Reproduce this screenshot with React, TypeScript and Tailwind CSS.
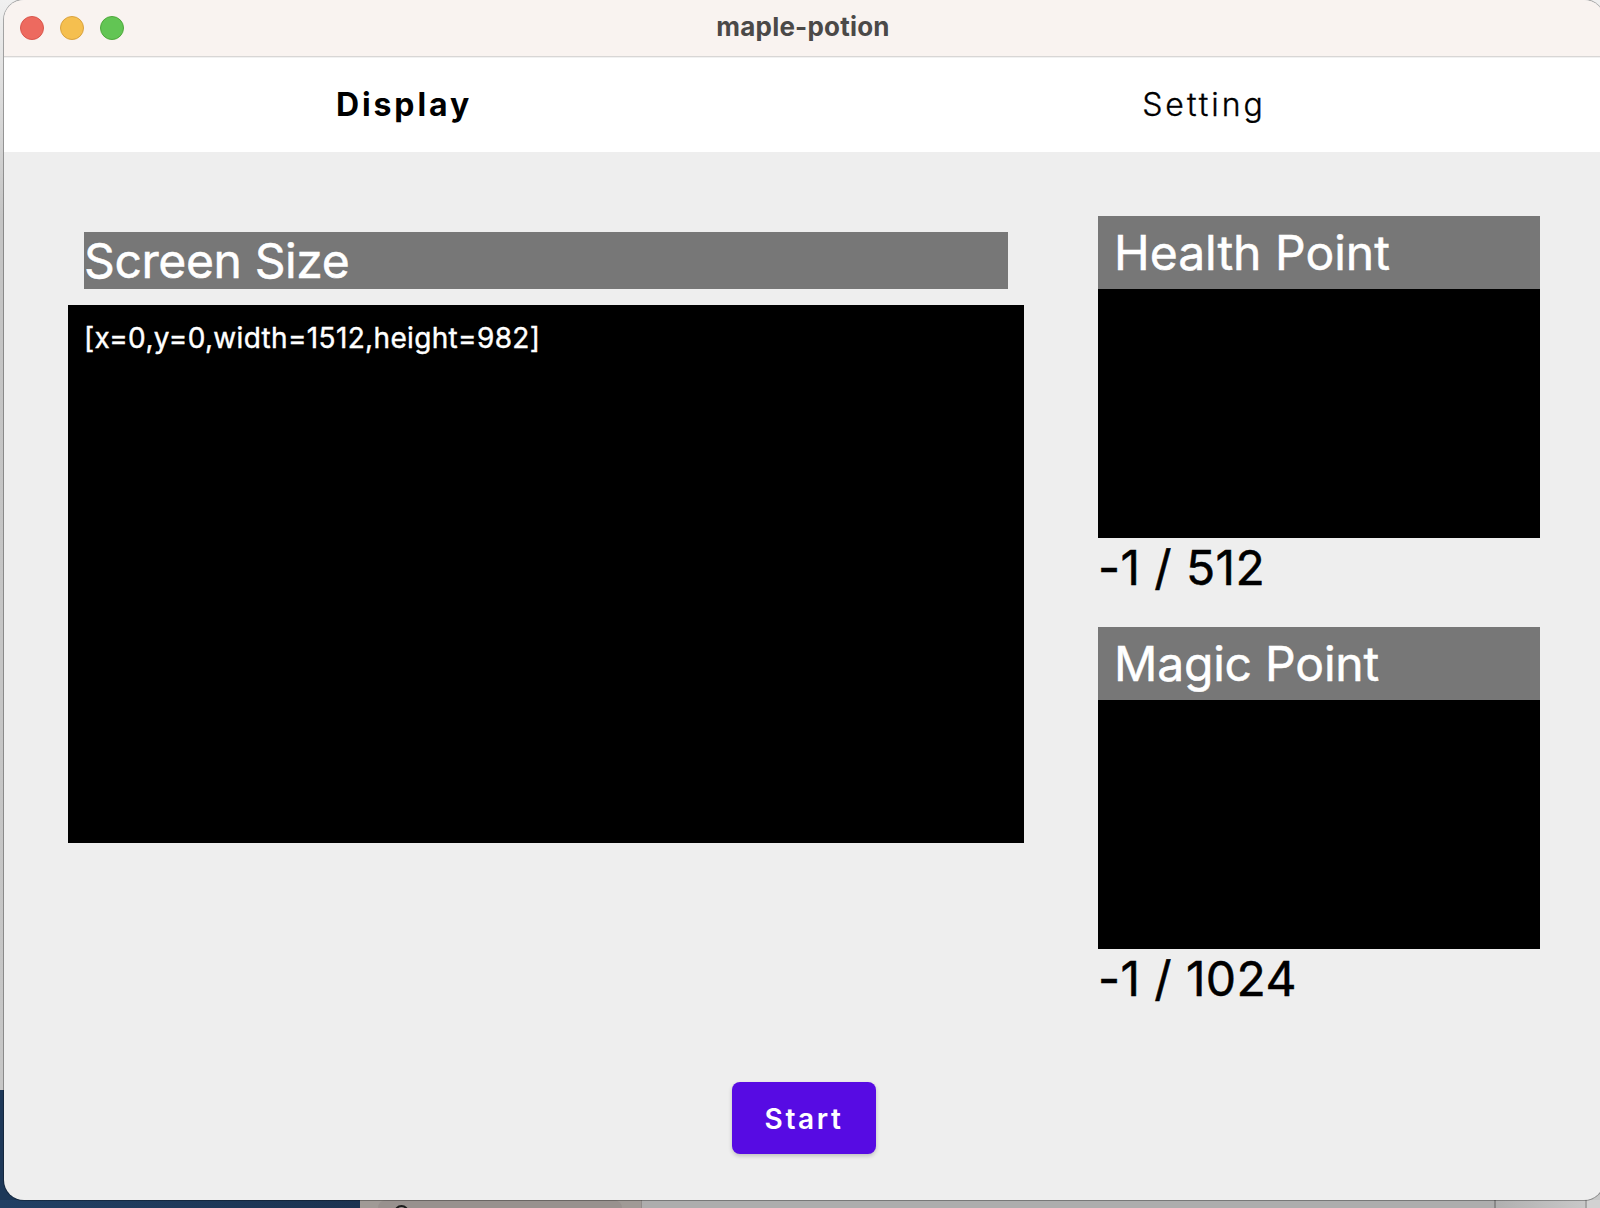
import React from "react";

function Vital({ title, value, tight }: { title: string; value: string; tight?: boolean }) {
  return (
    <section className="h-[411px]">
      <h2
        className={`flex h-[73px] items-center bg-[#777777] pl-4 text-[48px] leading-[57px] text-white [-webkit-text-stroke:0.5px_white] ${
          tight ? "tracking-[-0.2px]" : "tracking-normal"
        }`}
      >
        <span>{title}</span>
      </h2>
      <div className="h-[249px] bg-black" />
      <p className="pt-px text-[48px] leading-[57px] tracking-[0.4px] text-black [-webkit-text-stroke:0.5px_black]">
        <span>{value}</span>
      </p>
    </section>
  );
}

function DesktopBehind() {
  return (
    <div className="absolute inset-0 flex flex-col">
      <div className="h-[1090px] bg-linear-to-b from-[#f0f0f0] via-[#c4c4c4] via-20% to-[#c6c6c6]" />
      <div className="flex h-[110px] bg-[#c8c8c8]">
        <div className="w-[360px] bg-[#1d3858]" />
      </div>
      <div className="flex h-2">
        <div className="w-[360px] bg-linear-to-r from-[#214064] to-[#1b3250]" />
        <div className="w-[281px] bg-[#a09a96] pl-[18px]">
          <div className="h-2 w-[244px] overflow-hidden rounded-t-lg bg-[#98918e] pl-4">
            <svg className="mt-[5px]" width="16" height="16" viewBox="0 0 16 16" fill="none" stroke="#1c1c1c" strokeWidth="2">
              <circle cx="7.5" cy="7.5" r="6.5" />
            </svg>
          </div>
        </div>
        <div className="flex-1 border-l border-[#8f8b89] bg-[#adadad]" />
        <div className="w-[91px] border-l-2 border-[#888888] bg-linear-to-r from-[#b0b0b0] to-[#c8c8c8]" />
        <div className="w-[15px] border-l-2 border-[#a5a5a5] bg-[#d2d2d2]" />
      </div>
    </div>
  );
}

export default function App() {
  return (
    <div className="relative h-[1208px] w-[1600px] overflow-hidden font-['Inter',sans-serif]">
      <DesktopBehind />
      <main className="relative ml-1 flex h-[1200px] w-[1600px] flex-col overflow-hidden rounded-[20px] bg-[#eeeeee] shadow-[0_0_0_1px_rgba(0,0,0,0.3)]">
        <header className="flex h-[57px] shrink-0 items-center border-b border-[#d8d6d5] bg-[#f9f3f0] px-4">
          <div className="flex flex-1 gap-4">
            <i className="size-6 rounded-full border border-[#d9574d] bg-[#ed6a5f]" />
            <i className="size-6 rounded-full border border-[#d9a23f] bg-[#f5bf4f]" />
            <i className="size-6 rounded-full border border-[#4fa83c] bg-[#62c554]" />
          </div>
          <h1 className="mr-0.5 pb-0.5 text-[26px] leading-8 font-bold tracking-[0.2px] text-[#4b4948]"><span>maple-potion</span></h1>
          <div className="flex-1" />
        </header>
        <nav className="grid h-[95px] shrink-0 grid-cols-2 items-center border-t border-[#f1f1f1] bg-white pb-px text-center text-[32px] text-black">
          <span className="font-bold tracking-[2.9px]">Display</span>
          <span className="font-light tracking-[3px] [-webkit-text-stroke:0.35px_black]">Setting</span>
        </nav>
        <div className="flex h-[930px] shrink-0 pt-16 pr-16 pl-16">
          <section className="w-[956px] pt-4">
            <h2 className="mx-4 h-[57px] bg-[#777777] text-[48px] leading-[57px] tracking-[-0.38px] text-white [-webkit-text-stroke:0.5px_white]"><span>Screen Size</span></h2>
            <div className="mt-4 h-[538px] bg-black p-4 text-[28px] leading-[35px] tracking-[0.34px] text-white [-webkit-text-stroke:0.4px_white]">
              <span>[x=0,y=0,width=1512,height=982]</span>
            </div>
          </section>
          <div className="ml-[74px] w-[442px]">
            <Vital title="Health Point" value="-1 / 512" />
            <Vital title="Magic Point" value="-1 / 1024" tight />
          </div>
        </div>
        <button className="ml-[728px] h-[72px] w-36 shrink-0 rounded-lg bg-[#570be3] pt-0.5 text-[28px] font-semibold tracking-[2.6px] text-white shadow-[0_2px_4px_rgba(0,0,0,0.2)]">
          Start
        </button>
      </main>
    </div>
  );
}
